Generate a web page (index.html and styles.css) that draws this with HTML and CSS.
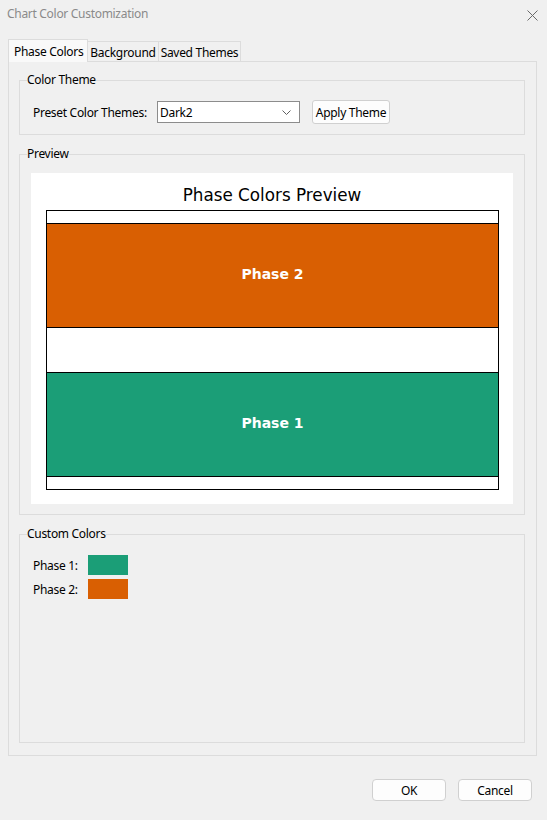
FILE: index.html
```html
<!DOCTYPE html>
<html lang="en">
<head>
<meta charset="utf-8">
<title>Chart Color Customization</title>
<link rel="stylesheet" href="styles.css">
</head>
<body>
<div class="window">
  <div class="titlebar">
    <span class="title">Chart Color Customization</span>
    <svg class="close" width="11" height="11" viewBox="0 0 11 11"><path d="M0.5 0.5 L10.5 10.5 M10.5 0.5 L0.5 10.5" stroke="#6a6a6a" stroke-width="1" fill="none"/></svg>
  </div>
  <div class="content">
    <div class="tabs">
      <div class="tab active">Phase Colors</div>
      <div class="tab">Background</div>
      <div class="tab">Saved Themes</div>
    </div>
    <div class="panel">
      <fieldset class="group theme-group">
        <legend>Color Theme</legend>
        <div class="theme-row">
          <span class="label">Preset Color Themes:</span>
          <div class="combo">
            <span>Dark2</span>
            <svg class="chev" width="9" height="5" viewBox="0 0 9 5"><path d="M0.5 0.5 L4.5 4.5 L8.5 0.5" stroke="#606060" stroke-width="1" fill="none"/></svg>
          </div>
          <button class="btn apply">Apply Theme</button>
        </div>
      </fieldset>
      <fieldset class="group preview-group">
        <legend>Preview</legend>
        <div class="chart">
          <div class="chart-title">Phase Colors Preview</div>
          <div class="plot">
            <div class="pad"></div>
            <div class="bar phase2">Phase 2</div>
            <div class="gap"></div>
            <div class="bar phase1">Phase 1</div>
            <div class="pad"></div>
          </div>
        </div>
      </fieldset>
      <fieldset class="group custom-group">
        <legend>Custom Colors</legend>
        <div class="colors">
          <div class="color-row"><span class="clabel">Phase 1:</span><div class="swatch green"></div></div>
          <div class="color-row"><span class="clabel">Phase 2:</span><div class="swatch orange"></div></div>
        </div>
      </fieldset>
    </div>
    <div class="footer">
      <button class="btn dlg">OK</button>
      <button class="btn dlg">Cancel</button>
    </div>
  </div>
</div>
</body>
</html>
```

FILE: styles.css
```css
* { box-sizing: border-box; }
html, body { margin: 0; padding: 0; }
body {
  background: #f0f0f0;
  font-family: "Noto Sans", "Open Sans", sans-serif;
  font-size: 12px;
  letter-spacing: -0.3px;
  color: #000;
}
.window {
  width: 547px;
  height: 820px;
  display: flex;
  flex-direction: column;
}
.titlebar {
  height: 29px;
  display: flex;
  align-items: center;
  justify-content: space-between;
  padding: 0 9px 0 7px;
}
.title {
  color: #8a8a8a;
  font-size: 12px;
  line-height: 16px;
  margin-top: -2px;
}
.close { margin-top: 2px; }
.content {
  padding: 10px 10px 0 8px;
  display: flex;
  flex-direction: column;
}
.tabs {
  display: flex;
  align-items: flex-end;
  height: 22px;
  position: relative;
  z-index: 1;
}
.tab {
  height: 20px;
  line-height: 21px;
  padding: 0 2px 0 2px;
  border: 1px solid #dcdcdc;
  border-bottom: none;
  border-left: none;
  background: #f0f0f0;
  white-space: nowrap;
}
.tab.active {
  height: 23px;
  margin-bottom: -1px;
  line-height: 24px;
  padding: 0 4px 0 5px;
  border-left: 1px solid #dcdcdc;
  background: #f9f9f9;
}
.panel {
  height: 695px;
  border: 1px solid #dcdcdc;
  padding: 0 11px 12px 10px;
  display: flex;
  flex-direction: column;
}
.group {
  margin: 0;
  padding: 0;
  min-width: 0;
  border: 1px solid #dcdcdc;
}
.group legend {
  margin-left: 7px;
  padding: 0;
  line-height: 16px;
  color: #000;
}
.theme-group { margin-top: 10px; }
.theme-row {
  display: flex;
  align-items: center;
  height: 24px;
  margin: 12px 0 10px 13px;
}
.label { width: 124px; flex: none; }
.combo {
  width: 143px;
  height: 22px;
  background: #fff;
  border: 1px solid #8c8c8c;
  display: flex;
  align-items: center;
  justify-content: space-between;
  padding: 0 8px 0 2px;
}
.chev { margin-top: 1px; }
.btn {
  font-family: inherit;
  font-size: 12px;
  letter-spacing: -0.3px;
  color: #000;
  background: #fdfdfd;
  border: 1px solid #d0d0d0;
  border-radius: 4px;
  padding: 0;
  margin: 0;
}
.apply {
  width: 78px;
  height: 24px;
  margin-left: 12px;
  border-radius: 3px;
}
.preview-group { margin-top: 11px; }
.chart {
  margin: 11px 11px 10px 11px;
  height: 331px;
  background: #fff;
  display: flex;
  flex-direction: column;
}
.chart-title {
  font-family: "DejaVu Sans", sans-serif;
  font-size: 16.8px;
  letter-spacing: 0;
  line-height: 19px;
  text-align: center;
  padding-top: 13px;
  height: 37px;
  color: #000;
}
.plot {
  margin: 0 14px 0 15px;
  height: 280px;
  border: 1px solid #000;
  display: flex;
  flex-direction: column;
}
.pad { height: 12px; }
.gap { height: 44px; }
.bar {
  height: 105px;
  padding-bottom: 4px;
  border-top: 1px solid #000;
  border-bottom: 1px solid #000;
  display: flex;
  align-items: center;
  justify-content: center;
  font-family: "DejaVu Sans", sans-serif;
  font-weight: bold;
  font-size: 14px;
  letter-spacing: 0;
  color: #fff;
}
.phase2 { background: #d95f02; }
.phase1 { background: #1b9e77; }
.custom-group {
  margin-top: 11px;
  flex: 1;
}
.colors {
  padding: 13px 0 0 13px;
  display: flex;
  flex-direction: column;
  gap: 4px;
}
.color-row {
  display: flex;
  align-items: center;
  height: 20px;
}
.clabel { width: 55px; }
.swatch { width: 40px; height: 20px; }
.swatch.green { background: #1b9e77; }
.swatch.orange { background: #d95f02; }
.footer {
  display: flex;
  justify-content: flex-end;
  gap: 12px;
  margin-top: 23px;
  padding-right: 5px;
}
.dlg {
  width: 74px;
  height: 22px;
}
```
